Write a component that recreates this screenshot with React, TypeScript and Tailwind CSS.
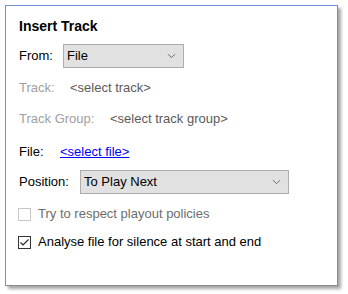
import React from "react";

function Chevron() {
  return (
    <svg width="9" height="6" viewBox="0 0 9 6" className="shrink-0">
      <path d="M1 1.2 L4.5 4.7 L8 1.2" fill="none" stroke="#6a6a6a" strokeWidth="1" />
    </svg>
  );
}

function Select({ value, width }: { value: string; width: string }) {
  return (
    <div
      className={`${width} h-[24px] flex items-center justify-between bg-[#e1e1e1] border border-[#adadad] pl-[3px] pr-[7px] text-black`}
    >
      <span>{value}</span>
      <Chevron />
    </div>
  );
}

export default function App() {
  return (
    <div
      className="w-[348px] h-[294px] bg-white pt-[5px] pl-[5px] text-[13px] leading-[16px]"
      style={{ fontFamily: '"Liberation Sans", Arial, sans-serif' }}
    >
      <div className="w-[333px] h-[281px] bg-white border-solid border-l border-t border-r border-b border-l-[#6f90d6] border-t-[#6f90d6] border-r-[#8a8a8a] border-b-[#8a8a8a] shadow-[3px_3px_3px_rgba(0,0,0,0.35)] pt-[12px] pl-[13px] flex flex-col">
        <div className="h-[16px] flex items-center font-bold text-[14px] text-black">Insert Track</div>

        <div className="mt-[10px] h-[24px] flex items-center">
          <span className="w-[44px] text-black">From:</span>
          <Select value="File" width="w-[121px]" />
        </div>

        <div className="mt-[12px] h-[16px] flex items-center">
          <span className="w-[51px] text-[#a0a0a0]">Track:</span>
          <span className="text-[#5a5a5a]">&lt;select track&gt;</span>
        </div>

        <div className="mt-[15px] h-[16px] flex items-center">
          <span className="w-[91px] text-[#a0a0a0]">Track Group:</span>
          <span className="text-[#5a5a5a]">&lt;select track group&gt;</span>
        </div>

        <div className="mt-[17px] h-[16px] flex items-center">
          <span className="w-[41px] text-black">File:</span>
          <span className="text-[#0000ff] underline">&lt;select file&gt;</span>
        </div>

        <div className="mt-[10px] h-[24px] flex items-center">
          <span className="w-[61px] text-black">Position:</span>
          <Select value="To Play Next" width="w-[209px]" />
        </div>

        <div className="mt-[12px] h-[16px] flex items-center -ml-[1px]">
          <span className="w-[13px] h-[13px] border border-[#c6c6c6] bg-white" />
          <span className="ml-[7px] text-[#6d6d6d]">Try to respect playout policies</span>
        </div>

        <div className="mt-[12px] h-[16px] flex items-center -ml-[1px]">
          <span className="w-[13px] h-[13px] border border-[#333333] bg-white flex items-center justify-center">
            <svg width="11" height="11" viewBox="0 0 11 11">
              <path d="M1.5 5.5 L4 8 L9.5 2.5" fill="none" stroke="#222" strokeWidth="1.1" />
            </svg>
          </span>
          <span className="ml-[7px] text-black">Analyse file for silence at start and end</span>
        </div>
      </div>
    </div>
  );
}
